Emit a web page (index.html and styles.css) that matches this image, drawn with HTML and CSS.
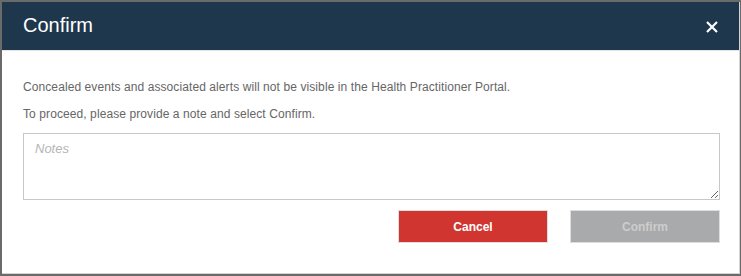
FILE: index.html
```html
<!DOCTYPE html>
<html>
<head>
<meta charset="utf-8">
<link rel="stylesheet" href="styles.css">
</head>
<body>
<div class="modal">
  <div class="modal-header">
    <h1 class="modal-title">Confirm</h1>
    <button class="close" aria-label="Close">
      <svg width="12" height="12" viewBox="0 0 12 12"><path d="M1 1 L11 11 M11 1 L1 11" stroke="#fff" stroke-width="2.2" stroke-linecap="butt"/></svg>
    </button>
  </div>
  <div class="modal-body">
    <p class="msg">Concealed events and associated alerts will not be visible in the Health Practitioner Portal.</p>
    <p class="msg msg-last">To proceed, please provide a note and select Confirm.</p>
    <textarea class="notes" placeholder="Notes"></textarea>
    <div class="actions">
      <button class="btn btn-cancel">Cancel</button>
      <button class="btn btn-confirm" disabled>Confirm</button>
    </div>
  </div>
</div>
</body>
</html>
```
FILE: styles.css
```css
html, body {
  margin: 0;
  padding: 0;
}
body {
  background: #6a6a6a;
  width: 741px;
  height: 276px;
  padding: 2px 0 0 2px;
  box-sizing: border-box;
  font-family: "Liberation Sans", Arial, sans-serif;
}
.modal {
  width: 738px;
  height: 272px;
  background: #fff;
  border-right: 1px solid #d4d4d4;
  border-bottom: 1px solid #d4d4d4;
  box-sizing: border-box;
}
.modal-header {
  height: 48px;
  background: #1f374d;
  border-bottom: 1px solid #e6e6e6;
  display: flex;
  align-items: center;
  justify-content: space-between;
  padding: 0 21px 0 21px;
}
.modal-title {
  margin: 0;
  color: #fff;
  font-size: 20px;
  font-weight: normal;
  line-height: 1;
  padding-bottom: 3px;
}
.close {
  background: none;
  border: 0;
  padding: 0;
  width: 12px;
  height: 12px;
  display: flex;
  margin-top: 1px;
}
.modal-body {
  display: flex;
  flex-direction: column;
  padding: 29px 19px 0 21px;
}
.msg {
  margin: 0 0 13px 0;
  font-size: 12px;
  line-height: 14px;
  color: #666;
  letter-spacing: 0.09px;
}
.msg-last {
  margin-bottom: 12px;
}
.notes {
  display: block;
  width: 697px;
  height: 67px;
  margin: 0;
  box-sizing: border-box;
  border: 1px solid #c8c8c8;
  padding: 7px 11px;
  font-family: "Liberation Sans", Arial, sans-serif;
  font-size: 13px;
  resize: vertical;
}
.notes::placeholder {
  color: #b5b5b5;
  font-style: italic;
}
.actions {
  display: flex;
  justify-content: flex-end;
  gap: 22px;
  margin-top: 10px;
  width: 697px;
}
.btn {
  width: 150px;
  height: 33px;
  border: 1px solid #dedede;
  font-family: "Liberation Sans", Arial, sans-serif;
  font-size: 12px;
  font-weight: bold;
  padding: 0;
}
.btn-cancel {
  background: #d13530;
  color: #fff;
}
.btn-confirm {
  background: #a9aaab;
  color: #cdcdcd;
}
```
